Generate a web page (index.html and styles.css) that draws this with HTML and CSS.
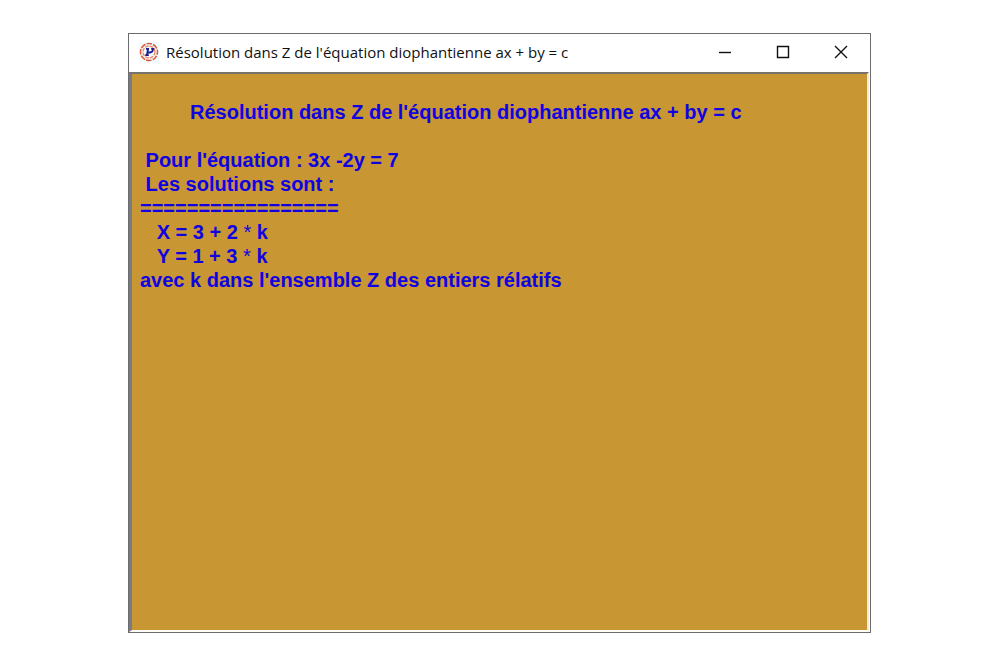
FILE: index.html
```
<!DOCTYPE html>
<html lang="fr">
<head>
<meta charset="utf-8">
<title>Résolution dans Z de l'équation diophantienne ax + by = c</title>
<link rel="stylesheet" href="styles.css">
</head>
<body>

    <div class="window">
        <div class="titlebar">
            <svg class="logo" width="20" height="20" viewBox="0 0 20 20">
                <rect width="20" height="20" fill="#f0fbfd"/>
                <circle cx="10" cy="10" r="8.5" fill="none" stroke="#e2563a" stroke-width="1.5" stroke-dasharray="5.5 1.17" stroke-dashoffset="2.7"/>
                <circle cx="10" cy="10" r="6" fill="none" stroke="#e8836c" stroke-width="1.3" stroke-dasharray="3.6 1.11"/>
                <path d="M7 6.8h3M9 7 8 13M6.2 13.2h3.6M12.2 6.8h2l-.8 2.6-2.2 1.1H8.5" fill="none" stroke="#171a91" stroke-width="1.8"/>
            </svg>
            <span class="caption">Résolution dans Z de l'équation diophantienne ax + by = c</span>
            <div class="controls">
                <button type="button" aria-label="Réduire">
                    <svg width="14" height="14" viewBox="0 0 14 14"><path d="M1 7.5h12"/></svg>
                </button>
                <button type="button" aria-label="Agrandir">
                    <svg width="14" height="14" viewBox="0 0 14 14"><path d="M1.5 1.5h11v11h-11z"/></svg>
                </button>
                <button type="button" aria-label="Fermer">
                    <svg width="14" height="14" viewBox="0 0 14 14"><path d="M1 1l12 12M13 1L1 13"/></svg>
                </button>
            </div>
        </div>

        <div class="console">
            <h1>         Résolution dans Z de l'équation diophantienne ax + by = c</h1>
            <p> Pour l'équation : 3x -2y = 7</p>
            <p> Les solutions sont :</p>
            <p>=================</p>
            <p>   X = 3 + 2 <span class="times">*</span> k</p>
            <p>   Y = 1 + 3 <span class="times">*</span> k</p>
            <p>avec k dans l'ensemble Z des entiers rélatifs</p>
        </div>
    </div>

</body>
</html>
```

FILE: styles.css
```
* {
    box-sizing: border-box;
}

body {
    display: flex;
    min-height: 100vh;
    margin: 0;
    padding: 33px 129px 33px 128px;
    background-color: white;
}

.window {
    flex: 1;
    display: flex;
    flex-direction: column;
    border: 1px solid #6a6c70;
    background-color: white;
}

.titlebar {
    display: flex;
    align-items: center;
    height: 38px;
    padding: 0 0 2px 10px;
    background-color: white;
}

.logo {
    flex: none;
    margin-right: 7px;
}

.caption {
    flex: 1;
    font: 15px "Open Sans", "Noto Sans", sans-serif;
    color: #111;
    white-space: nowrap;
}

.controls {
    display: flex;
    height: 100%;
}

.controls button {
    display: flex;
    align-items: center;
    justify-content: center;
    width: 58px;
    padding: 0;
    border: 0;
    background: none;
}

.controls svg {
    fill: none;
    stroke: #111;
    stroke-width: 1.4;
}

/* sunken client area */
.console {
    flex: 1;
    margin-right: 1px;
    padding: 26px 8px;
    border-style: solid;
    border-width: 2px 2px 2px 3px;
    border-color: #77736a #f4ead5 #fffdf6 #7b7b7b;
    background-color: #c89632;
    color: #1002e0;
    font: bold 20px/24px "Liberation Sans", Arial, sans-serif;
}

.console h1, .console p {
    margin: 0;
    font-size: 20px;
    white-space: pre-wrap;
}

.console h1 {
    margin-bottom: 24px;
}

.times {
    font-weight: normal;
}
```
